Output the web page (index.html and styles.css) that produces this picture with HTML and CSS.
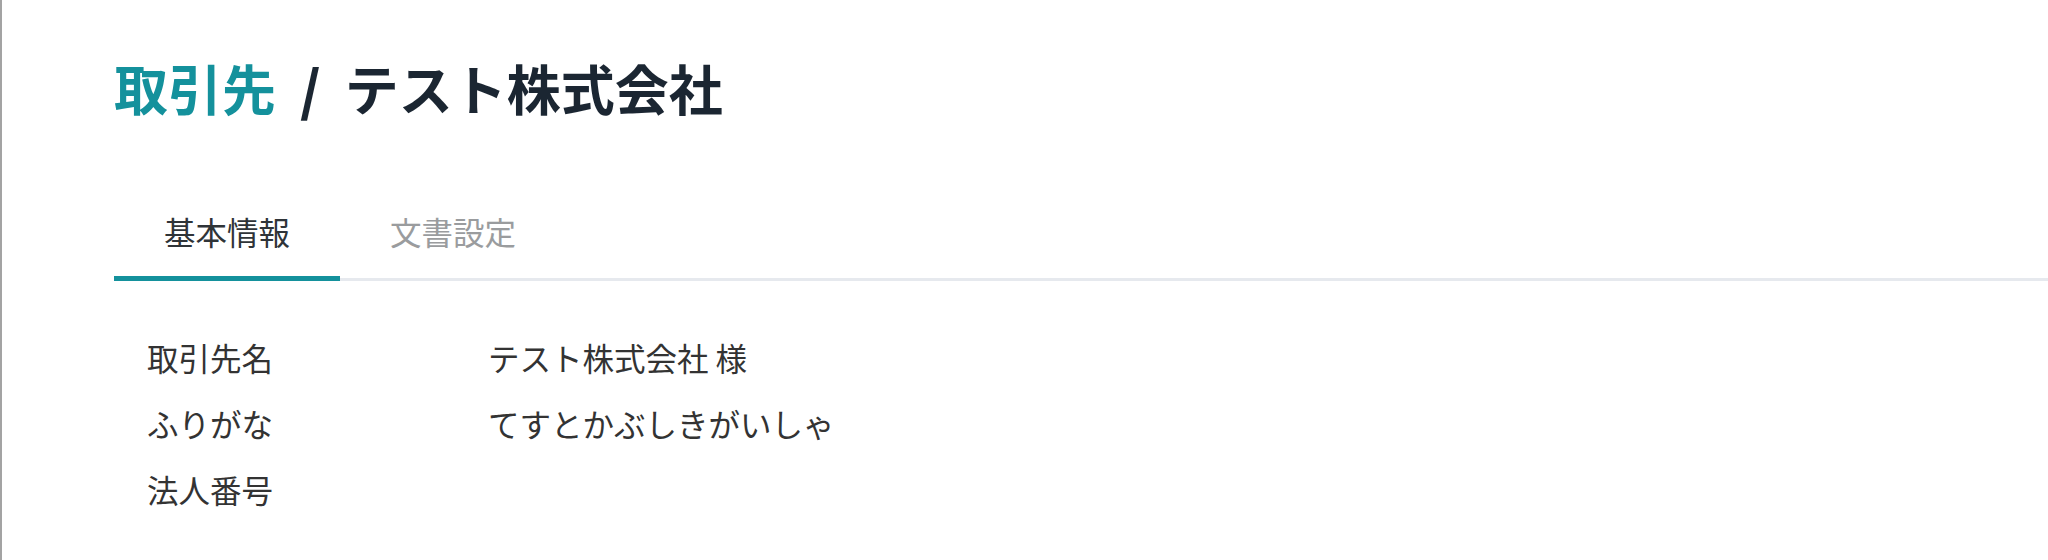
FILE: index.html
```html
<!DOCTYPE html>
<html lang="ja">
<head>
<meta charset="utf-8">
<title>取引先 / テスト株式会社</title>
<link rel="stylesheet" href="styles.css">
</head>
<body>
<div class="page">
  <h1 class="title"><span class="crumb">取引先</span><span class="sep">/</span><span class="name">テスト株式会社</span></h1>
  <nav class="tabs">
    <div class="tab active">基本情報</div>
    <div class="tab">文書設定</div>
  </nav>
  <dl class="info">
    <dt>取引先名</dt><dd>テスト株式会社 様</dd>
    <dt>ふりがな</dt><dd>てすとかぶしきがいしゃ</dd>
    <dt>法人番号</dt><dd></dd>
  </dl>
</div>
</body>
</html>
```
FILE: styles.css
```css
html, body {
  margin: 0;
  padding: 0;
  background: #ffffff;
}
body {
  font-family: "Noto Sans CJK JP", "Noto Sans", sans-serif;
  color: #333333;
}
.page {
  height: 560px;
  box-sizing: border-box;
  border-left: 2px solid #a3a3a3;
  padding: 0 0 0 112px;
}
.title {
  margin: 0;
  padding-top: 48px;
  font-size: 54px;
  line-height: 80px;
  font-weight: 700;
  color: #1b2632;
  display: flex;
  align-items: center;
}
.crumb {
  color: #14919c;
}
.sep {
  margin: 0 24px 0 24px;
  font-weight: 900;
}
.tabs {
  margin-top: 73px;
  display: flex;
  border-bottom: 3px solid #e6e9ee;
}
.tab {
  padding: 0 50px 15px;
  font-size: 31.5px;
  line-height: 60px;
  color: #9a9c9e;
  margin-bottom: -3px;
  border-bottom: 5px solid transparent;
}
.tab.active {
  color: #2f3438;
  border-bottom-color: #14919c;
}
.info {
  margin: 43px 0 0 0;
  padding-left: 33px;
  display: grid;
  grid-template-columns: 341px 1fr;
  grid-auto-rows: 66px;
  align-items: center;
  font-size: 31.5px;
  color: #333333;
}
.info dt, .info dd {
  margin: 0;
  line-height: 66px;
}
```
